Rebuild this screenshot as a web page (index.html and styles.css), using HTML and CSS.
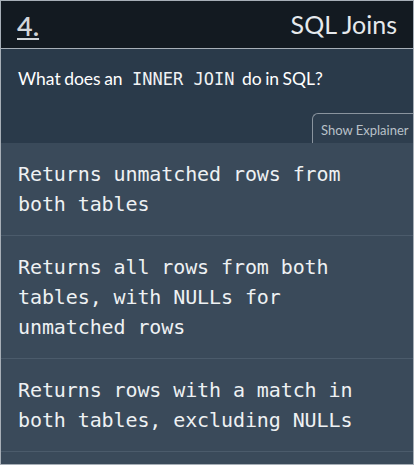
FILE: index.html
```html
<!DOCTYPE html>
<html>
<head>
<meta charset="utf-8">
<link rel="stylesheet" href="styles.css">
</head>
<body>
<div class="card">
  <header class="head">
    <span class="num">4.</span>
    <span class="topic">SQL Joins</span>
  </header>
  <section class="question">
    <p class="qtext">What does an <code>INNER JOIN</code> do in SQL?</p>
    <div class="tabrow"><button class="tab">Show Explainer</button></div>
  </section>
  <ul class="answers">
    <li class="answer">Returns unmatched rows from both tables</li>
    <li class="answer">Returns all rows from both tables, with NULLs for unmatched rows</li>
    <li class="answer">Returns rows with a match in both tables, excluding NULLs</li>
  </ul>
</div>
</body>
</html>
```
FILE: styles.css
```css
* { box-sizing: border-box; }
html, body { margin: 0; padding: 0; background: #ffffff; }
.card {
  width: 414px;
  height: 465px;
  border: 1px solid #a7afb7;
  overflow: hidden;
  background: #3a4a5a;
  font-family: "Lato", "Open Sans", sans-serif;
}
.head {
  height: 48px;
  background: #131a21;
  border-bottom: 1px solid #a7afb7;
  display: flex;
  align-items: center;
  justify-content: space-between;
  padding: 0 16px 0 16px;
  color: #e6e9ec;
}
.num {
  font-size: 27px;
  font-weight: 600;
  text-decoration: underline;
  text-underline-offset: 2px;
  text-decoration-thickness: 2px;
  color: #d2d6da;
  margin-top: 2px;
}
.topic {
  font-size: 25px;
  font-weight: 400;
  color: #e6e9ec;
  margin-top: -2px;
  margin-right: 0;
}
.question {
  background: #2a3a4a;
  height: 94px;
  display: flex;
  flex-direction: column;
  justify-content: space-between;
}
.qtext {
  margin: 0;
  padding: 19px 16px 0 17px;
  font-size: 17.5px;
  color: #ffffff;
  line-height: 22px;
  word-spacing: -1px;
}
.qtext code {
  font-family: "DejaVu Sans Mono", monospace;
  font-size: 17px;
  color: #f0f2f4;
  padding: 0 4px 0 6px;
  word-spacing: 0;
}
.tabrow {
  display: flex;
  justify-content: flex-end;
}
.tab {
  font-family: "Lato", "Open Sans", sans-serif;
  font-size: 13px;
  color: #b9c1c9;
  background: #2e3e4e;
  border: 1px solid #8a949e;
  border-bottom: none;
  border-right: none;
  border-radius: 6px 0 0 0;
  height: 30px;
  padding: 2px 3px 0 8px;
  margin-right: -3px;
  width: 104px;
  text-align: left;
  white-space: nowrap;
}
.answers {
  list-style: none;
  margin: 0;
  padding: 0;
}
.answer {
  font-family: "DejaVu Sans Mono", monospace;
  font-size: 20px;
  line-height: 30px;
  letter-spacing: -0.1px;
  color: #eef1f3;
  padding: 16px 20px 16px 17px;
  border-bottom: 1px solid #4b5b6b;
}
```
